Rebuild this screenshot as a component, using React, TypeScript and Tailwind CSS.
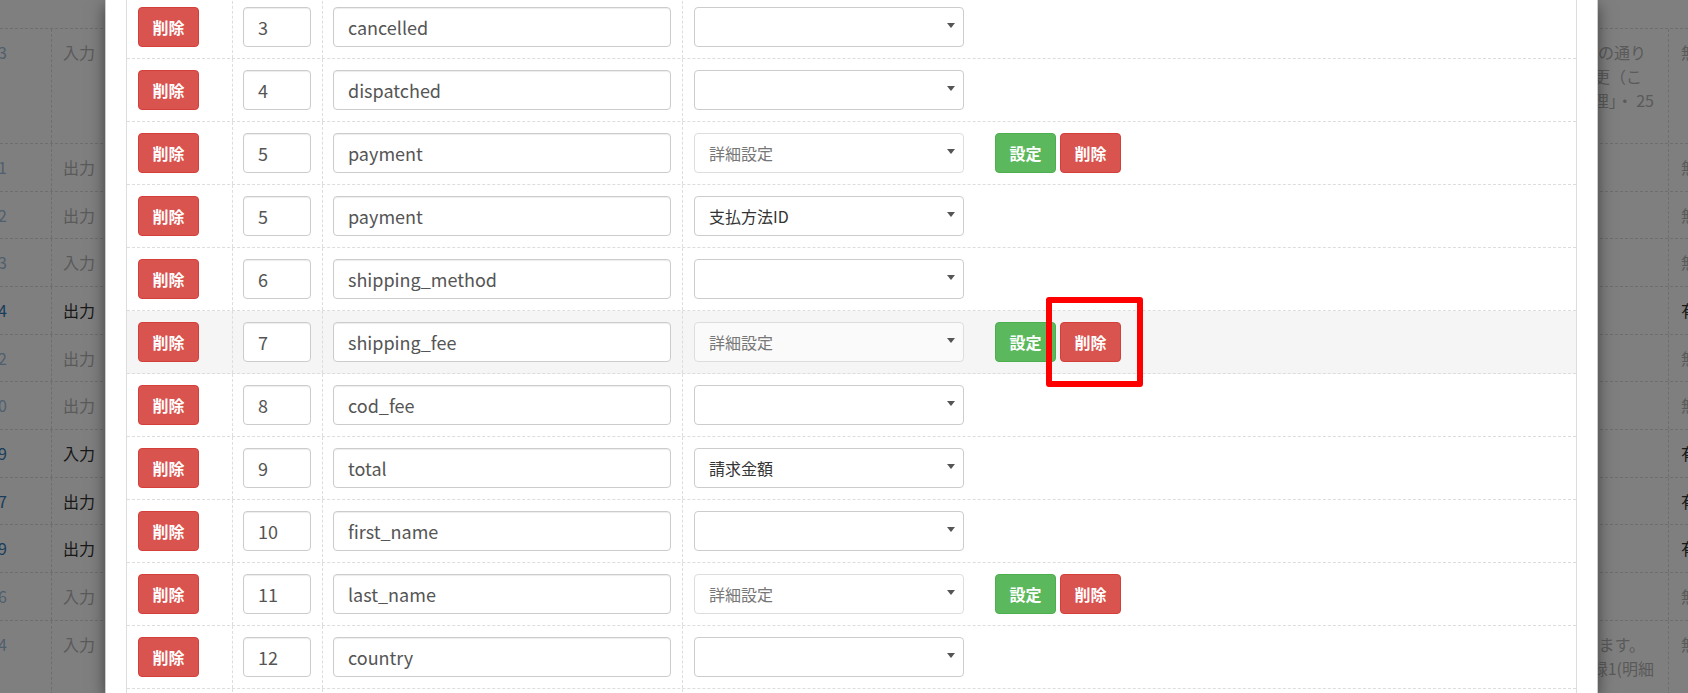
type Field = {
  no: number;
  name: string;
  select?: string;
  detail?: boolean;
  hover?: boolean;
  marked?: boolean;
};

const fields: Field[] = [
  { no: 3, name: "cancelled" },
  { no: 4, name: "dispatched" },
  { no: 5, name: "payment", select: "詳細設定", detail: true },
  { no: 5, name: "payment", select: "支払方法ID" },
  { no: 6, name: "shipping_method" },
  { no: 7, name: "shipping_fee", select: "詳細設定", detail: true, hover: true, marked: true },
  { no: 8, name: "cod_fee" },
  { no: 9, name: "total", select: "請求金額" },
  { no: 10, name: "first_name" },
  { no: 11, name: "last_name", select: "詳細設定", detail: true },
  { no: 12, name: "country" },
  { no: 13, name: "state" },
];

type Line = { text: string; pr: string };
type BgRow = { no: string; kind: string; dark?: boolean; flag: string; lines?: Line[]; h: string };

const bgRows: BgRow[] = [
  {
    no: "3",
    kind: "入力",
    flag: "無",
    h: "h-[115px]",
    lines: [
      { text: "ステータスを下記の通り", pr: "pr-[8px]" },
      { text: "受注データの状態を変更（こ", pr: "pr-[12px]" },
      { text: "れは「発送待ち」の処理」・ 25", pr: "pr-[0px]" },
    ],
  },
  { no: "1", kind: "出力", flag: "無", h: "h-[48px]" },
  { no: "2", kind: "出力", flag: "無", h: "h-[47px]" },
  { no: "3", kind: "入力", flag: "無", h: "h-[48px]" },
  { no: "4", kind: "出力", flag: "有", dark: true, h: "h-[48px]" },
  { no: "2", kind: "出力", flag: "無", h: "h-[47px]" },
  { no: "0", kind: "出力", flag: "無", h: "h-[48px]" },
  { no: "9", kind: "入力", flag: "有", dark: true, h: "h-[48px]" },
  { no: "7", kind: "出力", flag: "有", dark: true, h: "h-[47px]" },
  { no: "9", kind: "出力", flag: "有", dark: true, h: "h-[48px]" },
  { no: "6", kind: "入力", flag: "無", h: "h-[48px]" },
  {
    no: "4",
    kind: "入力",
    flag: "無",
    h: "h-[80px]",
    lines: [
      { text: "項目を出力します。", pr: "pr-[9px]" },
      { text: "受注データの付録1(明細", pr: "pr-[0px]" },
    ],
  },
];

function Caret() {
  return (
    <svg width="8" height="5" viewBox="0 0 8 5" className="mb-[4px]">
      <polygon points="0,0 8,0 4,5" fill="#555" />
    </svg>
  );
}

function DeleteButton() {
  return (
    <button className="flex h-[40px] w-[61px] items-center justify-center rounded-[4px] border border-[#d43f3a] bg-[#d9534f] text-[16px] font-bold text-white">
      削除
    </button>
  );
}

function FieldRow({ f }: { f: Field }) {
  return (
    <div className={`flex h-[63px] border-b border-dashed border-[#ddd] ${f.hover ? "bg-[#f5f5f5]" : ""}`}>
      <div className="flex w-[106px] items-center border-r border-dashed border-[#ddd] pl-[11px]">
        <DeleteButton />
      </div>
      <div className="flex w-[90px] items-center border-r border-dashed border-[#ddd] pl-[10px]">
        <div className="flex h-[40px] w-[68px] items-center rounded-[4px] border border-[#ccc] bg-white px-[14px] text-[18px] text-[#555] shadow-[inset_0_1px_1px_rgba(0,0,0,0.075)]">
          {f.no}
        </div>
      </div>
      <div className="flex w-[360px] items-center border-r border-dashed border-[#ddd] pl-[10px]">
        <div className="flex h-[40px] w-[338px] items-center rounded-[4px] border border-[#ccc] bg-white px-[14px] text-[18px] text-[#555] shadow-[inset_0_1px_1px_rgba(0,0,0,0.075)]">
          {f.name}
        </div>
      </div>
      <div className="flex flex-1 items-center pl-[11px]">
        <div
          className={`flex h-[40px] w-[270px] items-center justify-between rounded-[4px] border pl-[14px] pr-[8px] text-[16px] ${
            f.detail ? "border-[#ddd] bg-white/50 text-[#777]" : "border-[#ccc] bg-white text-[#333]"
          }`}
        >
          <span>{f.select ?? ""}</span>
          <Caret />
        </div>
        {f.detail && (
          <div className="ml-[31px] flex gap-[4px]">
            <button className="flex h-[40px] w-[61px] items-center justify-center rounded-[4px] border border-[#4cae4c] bg-[#5cb85c] text-[16px] font-bold text-white">
              設定
            </button>
            <div className="relative">
              <DeleteButton />
              {f.marked && (
                <div className="absolute -left-[14px] -top-[25px] h-[90px] w-[97px] rounded-[3px] border-[6px] border-[#ff0000]" />
              )}
            </div>
          </div>
        )}
      </div>
    </div>
  );
}

export default function App() {
  return (
    <div className="relative h-[693px] w-[1688px] overflow-hidden bg-white font-['Noto_Sans_CJK_JP',sans-serif] text-[16px] leading-[24px]">
      {/* page behind the modal */}
      <div className="flex flex-col">
        <div className="h-[29px] border-b border-dashed border-[#ddd]" />
        {bgRows.map((r, i) => (
          <div key={i} className={`flex ${r.h} border-b border-dashed border-[#ddd]`}>
            <div className={`w-[52px] border-r border-dashed border-[#ddd] pt-[11px] ${r.dark ? "text-[#337ab7]" : "text-[#9fbfdc]"}`}>
              <span className="-ml-[2px]">{r.no}</span>
            </div>
            <div className={`w-[120px] pl-[11px] pt-[11px] ${r.dark ? "text-[#333]" : "text-[#b5b5b5]"}`}>{r.kind}</div>
            <div className="flex flex-1 flex-col items-end border-r border-dashed border-[#ddd] pr-[14px] pt-[11px] text-[#b5b5b5]">
              {r.lines?.map((l) => (
                <div key={l.text} className={`whitespace-nowrap ${l.pr}`}>
                  {l.text}
                </div>
              ))}
            </div>
            <div className={`w-[19px] whitespace-nowrap pl-[12px] pt-[11px] ${r.dark ? "text-[#333]" : "text-[#b5b5b5]"}`}>{r.flag}</div>
          </div>
        ))}
      </div>

      {/* backdrop */}
      <div className="absolute inset-0 bg-black/50" />

      {/* modal */}
      <div className="absolute left-[105px] top-0 h-[693px] w-[1493px] overflow-hidden border-x border-black/20 bg-white px-[20px] shadow-[0_5px_15px_rgba(0,0,0,0.5)]">
        <div className="-mt-[4px] border-x border-[#ddd]">
          {fields.map((f, i) => (
            <FieldRow key={i} f={f} />
          ))}
        </div>
      </div>
    </div>
  );
}
